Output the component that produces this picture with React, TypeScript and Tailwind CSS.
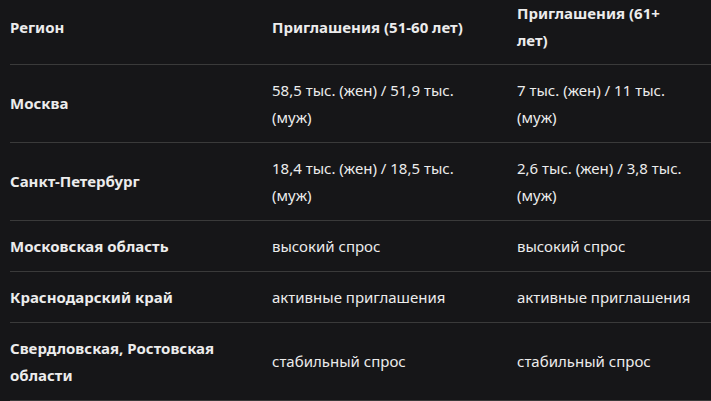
import React from "react";

const rows: [string, string, string][] = [
  ["Москва", "58,5 тыс. (жен) / 51,9 тыс. (муж)", "7 тыс. (жен) / 11 тыс. (муж)"],
  ["Санкт-Петербург", "18,4 тыс. (жен) / 18,5 тыс. (муж)", "2,6 тыс. (жен) / 3,8 тыс. (муж)"],
  ["Московская область", "высокий спрос", "высокий спрос"],
  ["Краснодарский край", "активные приглашения", "активные приглашения"],
  ["Свердловская, Ростовская области", "стабильный спрос", "стабильный спрос"],
];

export default function App() {
  return (
    <div
      className="w-[711px] h-[401px] overflow-hidden bg-[#161618] text-[#ececec] pl-[10px]"
      style={{ fontFamily: '"Noto Sans", "Open Sans", sans-serif' }}
    >
      <table className="table-fixed border-collapse w-[711px] text-[15px] leading-[27px]">
        <colgroup>
          <col className="w-[262px]" />
          <col className="w-[245px]" />
          <col className="w-[204px]" />
        </colgroup>
        <thead>
          <tr className="border-b border-[#3a3a3a]">
            <th className="text-left font-bold align-middle pr-[20px] pt-0 pb-[10px]">Регион</th>
            <th className="text-left font-bold align-middle pr-[20px] pt-0 pb-[10px]">Приглашения (51-60 лет)</th>
            <th className="text-left font-bold align-middle pr-[24px] pt-0 pb-[10px]">
              Приглашения (61+
              <br />
              лет)
            </th>
          </tr>
        </thead>
        <tbody>
          {rows.map((r, i) => (
            <tr key={i} className="border-b border-[#3a3a3a]">
              <td className="font-bold align-middle pr-[20px] py-[11.5px]">{r[0]}</td>
              <td className="align-middle pr-[20px] py-[11.5px]">{r[1]}</td>
              <td className="align-middle pr-[24px] py-[11.5px]">{r[2]}</td>
            </tr>
          ))}
        </tbody>
      </table>
    </div>
  );
}
